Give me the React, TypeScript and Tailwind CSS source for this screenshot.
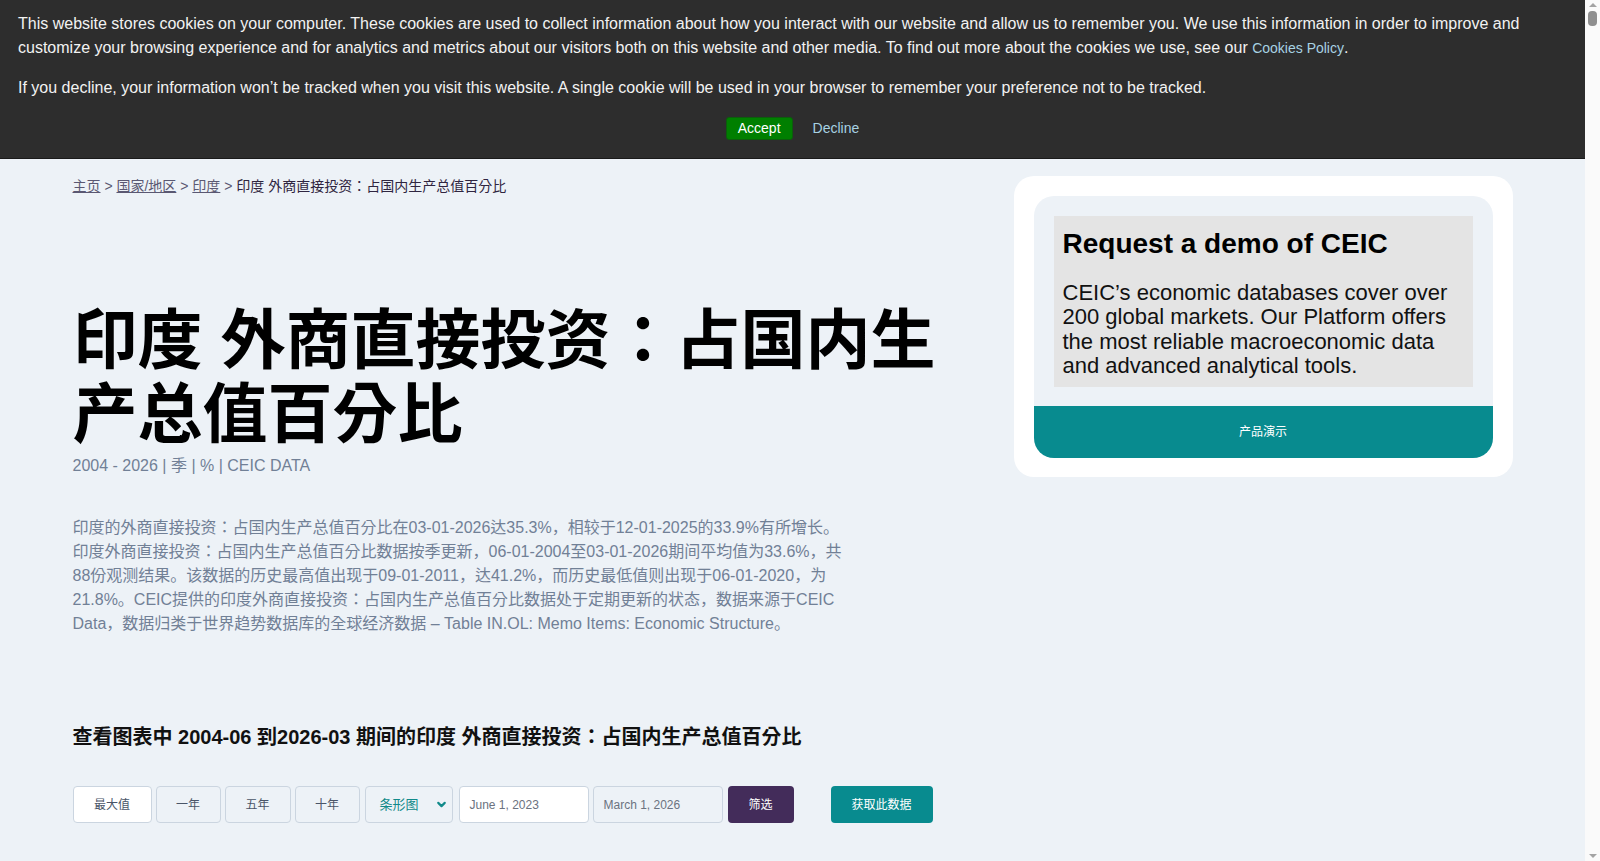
import { ChevronDown } from "lucide-react";

const rangeButtons = [
  { label: "最大值", w: "w-[79px]", active: true },
  { label: "一年", w: "w-[65px]" },
  { label: "五年", w: "w-[66px]" },
  { label: "十年", w: "w-[65px]" },
];

function CookieBanner() {
  return (
    <div className="absolute inset-x-0 top-0 z-20 h-[159px] border-b border-[#1a1a1a] bg-[#2d2d2d] px-[18px] pt-[12px] text-[16px] leading-[24px] text-[#f2f2f2]">
      <p>
        This website stores cookies on your computer. These cookies are used to collect information about how you
        interact with our website and allow us to remember you. We use this information in order to improve and
        customize your browsing experience and for analytics and metrics about our visitors both on this website and
        other media. To find out more about the cookies we use, see our{" "}
        <a className="text-[14px] text-[#a7d2e3]">Cookies Policy</a>.
      </p>
      <p className="mt-4">
        If you decline, your information won’t be tracked when you visit this website. A single cookie will be used in
        your browser to remember your preference not to be tracked.
      </p>
      <div className="mt-[17px] flex justify-center gap-[20px]">
        <button className="h-[23px] rounded-[3px] border border-[#0b5e0b] bg-[#007f00] px-[11px] text-[14px] leading-[21px] text-white">
          Accept
        </button>
        <button className="h-[23px] text-[14px] leading-[21px] text-[#a7d2e3]">Decline</button>
      </div>
    </div>
  );
}

function Scrollbar() {
  return (
    <div className="flex w-[15px] shrink-0 flex-col items-center bg-[#fafafa] py-[3px]">
      <div className="h-0 w-0 border-x-[4px] border-b-[4px] border-x-transparent border-b-[#a3a3a3]" />
      <div className="mt-[4px] h-[15px] w-[9px] rounded-[4px] bg-[#8f8f8f]" />
      <div className="flex-1" />
      <div className="h-0 w-0 border-x-[4px] border-t-[4px] border-x-transparent border-t-[#a3a3a3]" />
    </div>
  );
}

function DemoCard() {
  return (
    <aside className="w-[499px] shrink-0 rounded-[20px] bg-white p-5 pb-[19px]">
      <div className="overflow-hidden rounded-[20px] bg-[#edf2f7]">
        <div className="p-5 pb-[19px]">
          <div className="bg-[#e4e4e4] px-[9px] pb-[9px] pt-[10px]">
            <h3 className="text-[28px] font-bold leading-[36px] text-black">Request a demo of CEIC</h3>
            <p className="mt-[19px] text-[22px] leading-[24.3px] text-[#111]">
              CEIC’s economic databases cover over 200 global markets. Our Platform offers the most reliable
              macroeconomic data and advanced analytical tools.
            </p>
          </div>
        </div>
        <button className="flex h-[52px] w-full items-center justify-center bg-[#088b8f] text-[12px] text-white">
          产品演示
        </button>
      </div>
    </aside>
  );
}

function Controls() {
  return (
    <div className="flex h-[37px] items-stretch gap-[4px] text-[12px]">
      {rangeButtons.map((b) => (
        <button
          key={b.label}
          className={`${b.w} rounded-[4px] border border-[#cbd5e0] ${
            b.active ? "bg-white" : "bg-[#edf2f7]"
          } text-[#4a5568]`}
        >
          {b.label}
        </button>
      ))}
      <div className="ml-[1px] flex w-[88px] items-center justify-between rounded-[4px] border border-[#cbd5e0] bg-[#edf2f7] pl-[14px] pr-[4px] text-[13px] text-[#118a8a]">
        <span>条形图</span>
        <ChevronDown size={13} strokeWidth={4} className="text-[#118a8a]" />
      </div>
      <div className="ml-[2px] flex w-[130px] items-center rounded-[4px] border border-[#cbd5e0] bg-white px-[10px] text-[#6b7280]">
        June 1, 2023
      </div>
      <div className="flex w-[130px] items-center rounded-[4px] border border-[#cbd5e0] bg-[#edf2f7] px-[10px] text-[#6b7280]">
        March 1, 2026
      </div>
      <button className="ml-[1px] w-[66px] rounded-[4px] bg-[#432c5a] text-white">筛选</button>
      <button className="ml-[33px] w-[102px] rounded-[4px] bg-[#088b8f] text-white">获取此数据</button>
    </div>
  );
}

export default function App() {
  return (
    <div className="flex h-screen overflow-hidden font-['Liberation_Sans','Noto_Sans_CJK_KR',sans-serif]">
      <div className="relative flex-1 overflow-hidden bg-[#edf2f7]">
        <CookieBanner />
        <main className="mx-auto flex w-[1440px] items-start gap-[73px] pt-[176px]">
          <section className="flex-1">
            <nav className="text-[14px] leading-[20px] text-[#5a5872]">
              <a className="underline">主页</a> &gt; <a className="underline">国家/地区</a> &gt;{" "}
              <a className="underline">印度</a> &gt;{" "}
              <span className="text-[#2f2540]">印度 外商直接投资：占国内生产总值百分比</span>
            </nav>
            <h1 className="mt-[108px] text-[65px] font-bold leading-[73.5px] text-black">
              印度 外商直接投资：占国内生产总值百分比
            </h1>
            <p className="mt-[3px] text-[16px] leading-[24px] text-[#718096]">2004 - 2026 | 季 | % | CEIC DATA</p>
            <p className="mt-[38px] w-[778px] text-[16px] leading-[24px] text-[#718096]">
              印度的外商直接投资：占国内生产总值百分比在03-01-2026达35.3%，相较于12-01-2025的33.9%有所增长。
              印度外商直接投资：占国内生产总值百分比数据按季更新，06-01-2004至03-01-2026期间平均值为33.6%，共88份观测结果。该数据的历史最高值出现于09-01-2011，达41.2%，而历史最低值则出现于06-01-2020，为21.8%。CEIC提供的印度外商直接投资：占国内生产总值百分比数据处于定期更新的状态，数据来源于CEIC
              Data，数据归类于世界趋势数据库的全球经济数据 – Table IN.OL: Memo Items: Economic Structure。
            </p>
            <h2 className="mt-[87px] text-[20px] font-bold leading-[28px] text-[#111]">
              查看图表中 2004-06 到2026-03 期间的印度 外商直接投资：占国内生产总值百分比
            </h2>
            <div className="mt-[35px]">
              <Controls />
            </div>
          </section>
          <DemoCard />
        </main>
      </div>
      <Scrollbar />
    </div>
  );
}
